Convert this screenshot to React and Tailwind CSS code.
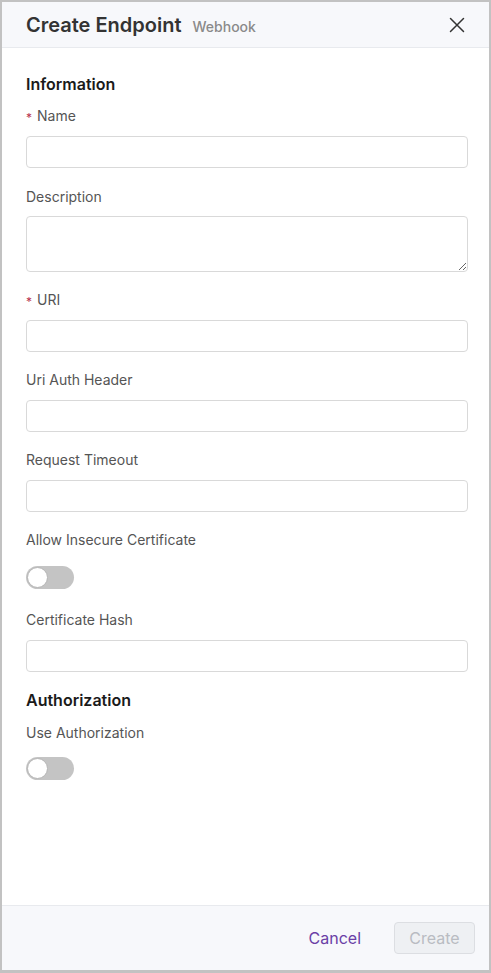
const font = { fontFamily: "Inter, 'Noto Sans', sans-serif" };

function Label({ children, required }) {
  return (
    <div className="flex h-5 items-center text-[14px] leading-5 text-[#555]">
      {required && <span className="mr-[5px] mt-[3px] text-[12px] text-[#b8324e]">*</span>}
      {children}
    </div>
  );
}

function TextField({ label, required, className = "mb-[18px]" }) {
  return (
    <div className={className}>
      <Label required={required}>{label}</Label>
      <input
        type="text"
        className="mt-[10px] block h-8 w-full rounded-[4px] border border-[#d9d9d9] bg-white px-3 text-sm outline-none"
      />
    </div>
  );
}

function Toggle() {
  return (
    <div className="relative h-[23px] w-[48px] rounded-full bg-[#c4c4c4]">
      <div className="absolute left-[1px] top-[1px] h-[21px] w-[21px] rounded-full border border-[#b5b5b5] bg-white" />
    </div>
  );
}

export default function App() {
  return (
    <div
      style={font}
      className="flex h-[973px] w-[491px] flex-col border-x-2 border-t-2 border-b-[3px] border-[#c2c2c2] bg-white"
    >
      <header className="flex h-[46px] shrink-0 items-center justify-between border-b border-[#e8eaee] bg-[#f7f8fb] pl-6 pr-[24px]">
        <div className="flex items-baseline">
          <h1 className="text-[20px] font-semibold text-[#333]">Create Endpoint</h1>
          <span className="ml-[11px] text-[14px] font-medium text-[#8a8a8a]">Webhook</span>
        </div>
        <svg width="16" height="16" viewBox="0 0 16 16" className="text-[#333]">
          <path d="M1.5 1.5 14.5 14.5M14.5 1.5 1.5 14.5" stroke="currentColor" strokeWidth="1.5" strokeLinecap="round" />
        </svg>
      </header>

      <main className="flex-1 pl-6 pr-[21px] pt-6">
        <h2 className="mb-[10px] h-6 text-[16px] font-semibold leading-6 text-[#1a1a1a]">Information</h2>
        <TextField label="Name" required className="mb-[19px]" />
        <div className="mb-[18px]">
          <Label>Description</Label>
          <textarea className="mt-[9px] block h-[56px] w-full rounded-[4px] border border-[#d9d9d9] px-3 text-sm outline-none" />
        </div>
        <TextField label="URI" required />
        <TextField label="Uri Auth Header" />
        <TextField label="Request Timeout" />
        <div className="mb-[21px]">
          <Label>Allow Insecure Certificate</Label>
          <div className="mt-[16px]">
            <Toggle />
          </div>
        </div>
        <TextField label="Certificate Hash" className="mb-4" />
        <h2 className="mb-[11px] h-6 text-[16px] font-semibold leading-6 text-[#1a1a1a]">Authorization</h2>
        <Label>Use Authorization</Label>
        <div className="mt-[14px]">
          <Toggle />
        </div>
      </main>

      <footer className="flex h-[65px] shrink-0 items-center justify-end gap-[33px] border-t border-[#e8eaee] bg-[#f7f8fb] pr-[14px]">
        <button className="text-[16px] text-[#6a3fa6]">Cancel</button>
        <button
          disabled
          className="h-8 w-[81px] rounded-[4px] border border-[#dcdee2] bg-[#eef0f3] text-[16px] text-[#b9bcc2]"
        >
          Create
        </button>
      </footer>
    </div>
  );
}
